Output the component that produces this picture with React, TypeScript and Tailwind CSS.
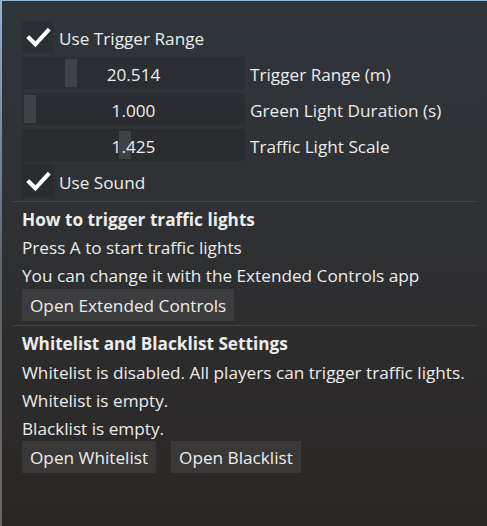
import React from "react";

const font = { fontFamily: '"Open Sans", "Noto Sans", sans-serif' };

function Check() {
  return (
    <div className="w-8 h-8 bg-black/10 flex items-center justify-center shrink-0">
      <svg width="25" height="25" viewBox="0 0 24 24">
        <path d="M3 12.5 L9 18.5 L21 5.5" fill="none" stroke="#ffffff" strokeWidth="3.9" strokeLinecap="square" />
      </svg>
    </div>
  );
}

function CheckRow({ label }: { label: string }) {
  return (
    <div className="flex items-center gap-[5px] h-8">
      <Check />
      <span className="pt-[3px] text-[17.2px] text-[#ececec] whitespace-nowrap">{label}</span>
    </div>
  );
}

function SliderRow({ value, label, pos }: { value: string; label: string; pos: number }) {
  return (
    <div className="flex items-center h-8 gap-[5px]">
      <div className="relative w-[223px] h-8 pt-[3px] bg-black/10 flex items-center justify-center shrink-0">
        <div className="absolute top-[2px] bottom-[2px] w-3 bg-white/10" style={{ left: pos }} />
        <span className="relative text-[17.2px] text-[#ececec]">{value}</span>
      </div>
      <span className="pt-[3px] text-[17.2px] text-[#ececec] whitespace-nowrap">{label}</span>
    </div>
  );
}

function Btn({ children }: { children: React.ReactNode }) {
  return (
    <div className="h-8 px-2 pt-[2px] bg-white/[0.07] flex items-center text-[17.2px] text-[#ececec] whitespace-nowrap">{children}</div>
  );
}

export default function App() {
  return (
    <div className="w-[487px] h-[526px] bg-linear-to-b from-[#8fb4d6] via-[#5d6670] to-[#6e665c] pt-px pl-[2px]" style={font}>
      <div className="w-full h-full bg-linear-to-b from-[#30353b] via-[#2e2f31] to-[#2a2625] pt-5 px-5 flex flex-col">
        <div className="flex flex-col gap-1">
          <CheckRow label="Use Trigger Range" />
          <SliderRow value="20.514" label="Trigger Range (m)" pos={43} />
          <SliderRow value="1.000" label="Green Light Duration (s)" pos={2} />
          <SliderRow value="1.425" label="Traffic Light Scale" pos={97} />
          <CheckRow label="Use Sound" />
        </div>
        <div className="h-px bg-white/10 -mx-[10px] mt-1 mb-[3px]" />
        <div className="flex flex-col text-[17.2px] text-[#ececec] whitespace-nowrap">
          <div className="h-7 pt-[2px] flex items-center font-bold">How to trigger traffic lights</div>
          <div className="h-7 pt-[2px] flex items-center">Press A to start traffic lights</div>
          <div className="h-7 pt-[2px] flex items-center">You can change it with the Extended Controls app</div>
          <div className="flex">
            <Btn>Open Extended Controls</Btn>
          </div>
        </div>
        <div className="h-px bg-white/10 -mx-[10px] mt-1 mb-[3px]" />
        <div className="flex flex-col text-[17.2px] text-[#ececec] whitespace-nowrap">
          <div className="h-7 pt-[2px] flex items-center font-bold">Whitelist and Blacklist Settings</div>
          <div className="h-7 pt-[3px] flex items-center">Whitelist is disabled. All players can trigger traffic lights.</div>
          <div className="h-7 pt-[3px] flex items-center">Whitelist is empty.</div>
          <div className="h-7 pt-[3px] flex items-center">Blacklist is empty.</div>
          <div className="flex gap-[15px]">
            <Btn>Open Whitelist</Btn>
            <Btn>Open Blacklist</Btn>
          </div>
        </div>
      </div>
    </div>
  );
}
